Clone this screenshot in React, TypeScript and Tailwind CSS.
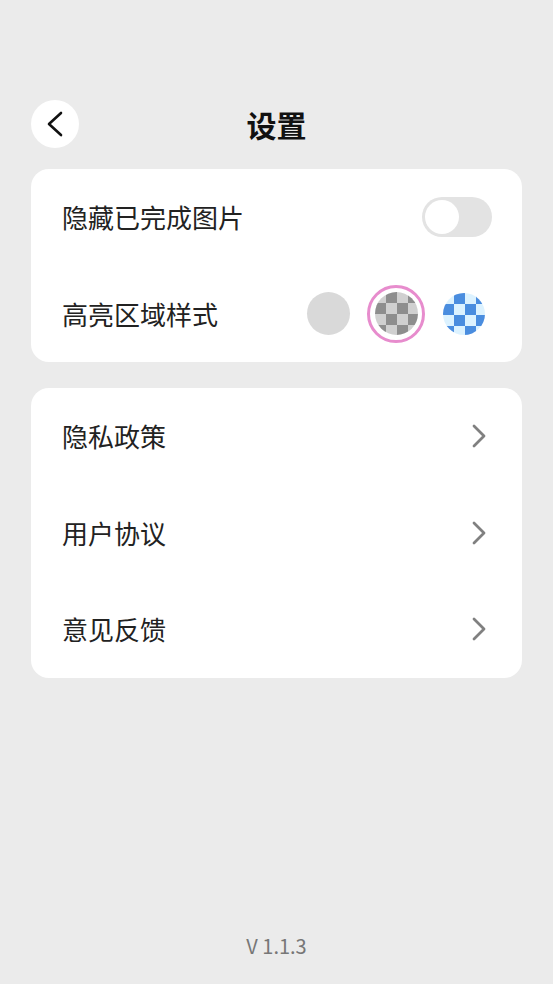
import { useState } from "react";

const font = { fontFamily: '"Noto Sans CJK SC", "Noto Sans", sans-serif' };

const Chevron = ({ dir = "right" }: { dir?: "left" | "right" }) =>
  dir === "right" ? (
    <svg width="14" height="24" viewBox="0 0 14 24" fill="none">
      <polyline points="2,2 12,12 2,22" stroke="#808080" strokeWidth="2.8" strokeLinecap="round" strokeLinejoin="round" />
    </svg>
  ) : (
    <svg width="18" height="26" viewBox="0 0 18 26" fill="none">
      <polyline points="15,2 3,13 15,24" stroke="#111" strokeWidth="2.6" strokeLinecap="round" strokeLinejoin="round" />
    </svg>
  );

const Toggle = ({ on, onClick }: { on: boolean; onClick: () => void }) => (
  <button
    onClick={onClick}
    className={`relative h-[40px] w-[70px] rounded-full transition-colors ${on ? "bg-[#e98fd3]" : "bg-[#e3e3e3]"}`}
  >
    <span
      className={`absolute top-[3px] h-[34px] w-[34px] rounded-full bg-white transition-all ${on ? "left-[33px]" : "left-[3px]"}`}
    />
  </button>
);

const styles = ["plain", "gray", "blue"] as const;

export default function App() {
  const [hideDone, setHideDone] = useState(false);
  const [style, setStyle] = useState<(typeof styles)[number]>("gray");

  return (
    <div className="flex min-h-[984px] flex-col bg-[#ebebeb] px-[31px]" style={font}>
      {/* header */}
      <div className="relative mt-[100px] flex h-[48px] items-center justify-center">
        <button className="absolute left-0 top-0 flex h-[48px] w-[48px] items-center justify-center rounded-full bg-white">
          <Chevron dir="left" />
        </button>
        <h1 className="text-[30px] font-bold leading-none text-[#111]">设置</h1>
      </div>

      {/* display options */}
      <div className="mt-[21px] rounded-[18px] bg-white">
        <div className="flex h-[96px] items-center justify-between pl-[31px] pr-[30px]">
          <span className="text-[26px] leading-none text-[#222]">隐藏已完成图片</span>
          <Toggle on={hideDone} onClick={() => setHideDone(!hideDone)} />
        </div>
        <div className="flex h-[97px] items-center justify-between pl-[31px] pr-[29px]">
          <span className="text-[26px] leading-none text-[#222]">高亮区域样式</span>
          <div className="flex items-center gap-[10px]">
            {styles.map((s) => (
              <button
                key={s}
                onClick={() => setStyle(s)}
                className={`flex h-[58px] w-[58px] items-center justify-center rounded-full border-[3px] ${
                  style === s ? "border-[#e78ccd]" : "border-transparent"
                }`}
              >
                {s === "plain" && <span className="h-[43px] w-[43px] rounded-full bg-[#d9d9d9]" />}
                {s === "gray" && (
                  <span className="h-[43px] w-[43px] rounded-full bg-[conic-gradient(#8e8e8e_25%,#d0d0d0_0_50%,#8e8e8e_0_75%,#d0d0d0_0)] bg-[length:22px_22px]" />
                )}
                {s === "blue" && (
                  <span className="h-[42px] w-[42px] rounded-full bg-[conic-gradient(#4a8ddf_25%,#dcf2ff_0_50%,#4a8ddf_0_75%,#dcf2ff_0)] bg-[length:22px_22px]" />
                )}
              </button>
            ))}
          </div>
        </div>
      </div>

      {/* links */}
      <div className="mt-[26px] rounded-[18px] bg-white">
        {["隐私政策", "用户协议", "意见反馈"].map((label) => (
          <div key={label} className="flex h-[96.5px] items-center justify-between pl-[31px] pr-[36px]">
            <span className="text-[26px] leading-none text-[#222]">{label}</span>
            <Chevron />
          </div>
        ))}
      </div>

      <div className="mt-auto pb-[28px] text-center text-[20px] leading-none text-[#777]">V 1.1.3</div>
    </div>
  );
}
